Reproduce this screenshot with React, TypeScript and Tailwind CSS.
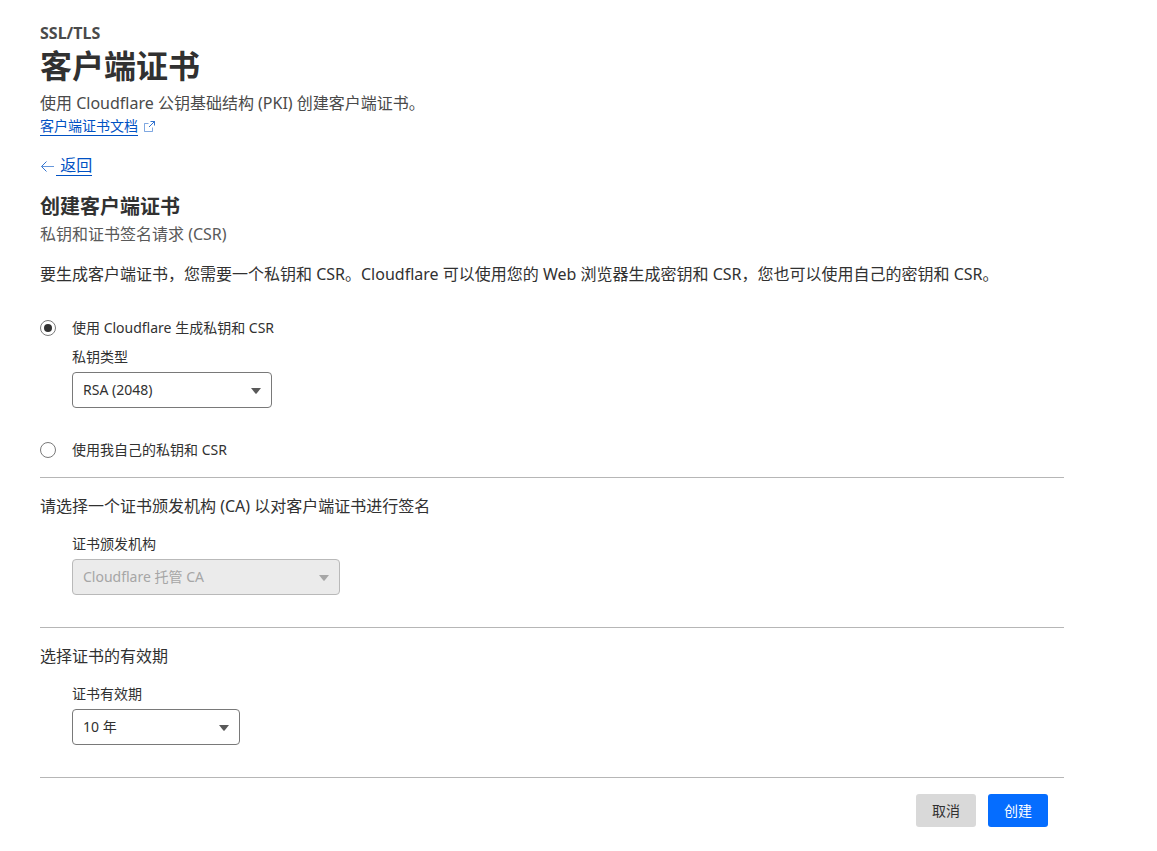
import { useState, type ReactNode } from "react";

function Select({
  id,
  label,
  options,
  width,
  disabled = false,
}: {
  id: string;
  label: string;
  options: string[];
  width: string;
  disabled?: boolean;
}) {
  return (
    <div>
      <label htmlFor={id} className="mb-[5px] block text-sm leading-5">
        {label}
      </label>
      <div className={`relative max-w-full ${width}`}>
        <select
          id={id}
          disabled={disabled}
          className="h-9 w-full appearance-none rounded border border-[#797979] bg-white pl-2.5 pr-8 text-sm leading-5 text-[#313131] disabled:border-[#b9b9b9] disabled:bg-[#ebebeb] disabled:text-[#a6a6a6] disabled:opacity-100"
        >
          {options.map((option) => (
            <option key={option}>{option}</option>
          ))}
        </select>
        <svg
          viewBox="0 0 10 6"
          className={`pointer-events-none absolute right-[11px] top-4 h-1.5 w-2.5 ${
            disabled ? "fill-[#a6a6a6]" : "fill-[#595959]"
          }`}
          aria-hidden="true"
        >
          <path d="M0 0h10L5.6 5.4a.8.8 0 0 1-1.2 0z" />
        </svg>
      </div>
    </div>
  );
}

function Radio({
  id,
  checked,
  onChange,
  children,
}: {
  id: string;
  checked: boolean;
  onChange: () => void;
  children: ReactNode;
}) {
  return (
    <div className="flex items-center gap-4">
      <input
        type="radio"
        id={id}
        name="key-source"
        checked={checked}
        onChange={onChange}
        className="grid size-4 shrink-0 appearance-none place-items-center rounded-full border border-[#797979] bg-white before:size-2 before:rounded-full checked:before:bg-[#313131]"
      />
      <label htmlFor={id} className="text-sm leading-5">
        {children}
      </label>
    </div>
  );
}

function Section({ title, children }: { title: string; children: ReactNode }) {
  return (
    <section className="border-t border-[#b6b6b6] pb-8 pt-4">
      <h3 className="mb-4 text-base">{title}</h3>
      <div className="pl-8">{children}</div>
    </section>
  );
}

export default function App() {
  const [source, setSource] = useState("cloudflare");

  return (
    <main
      lang="zh-CN"
      className="min-h-screen bg-white px-10 pb-6 pt-[21px] font-['Noto_Sans','Noto_Sans_CJK_SC',sans-serif] text-[#313131]"
    >
      <div className="max-w-5xl">
        <header>
          <p className="text-base font-bold text-[#4a4a4a]">SSL/TLS</p>
          <h1 className="text-[32px] font-bold leading-[42px]">客户端证书</h1>
          <p className="mt-1 text-base text-[#4a4a4a]">
            使用 Cloudflare 公钥基础结构 (PKI) 创建客户端证书。
          </p>
          <a
            href="#docs"
            className="mt-px flex w-fit items-center gap-1.5 text-sm text-[#0051c3]"
          >
            <span className="border-b border-[#0051c3] leading-[19px]">
              客户端证书文档
            </span>
            <svg
              viewBox="0 0 11 11"
              className="size-[11px] fill-none stroke-[#0051c3]"
              aria-hidden="true"
            >
              <path
                d="M4.5 2.5h-4v8h8v-4"
                className="opacity-50"
              />
              <path d="M6.5.5h4v4M10.5.5l-5.5 5.5" className="opacity-80" />
            </svg>
          </a>
        </header>

        <a
          href="#back"
          className="mt-5 flex w-fit items-center text-base text-[#0051c3]"
        >
          <svg
            viewBox="0 0 16 12"
            className="h-3 w-4 fill-none stroke-[#0051c3]"
            aria-hidden="true"
          >
            <path d="M14 6.5H2" className="opacity-60" />
            <path d="M6.5 1.5l-5 5 5 5" className="opacity-80" />
          </svg>
          <span className="whitespace-pre border-b border-[#0051c3] leading-[19px]">
            {" 返回"}
          </span>
        </a>

        <h2 className="mt-4 text-xl font-bold leading-[30px]">
          创建客户端证书
        </h2>
        <p className="text-base text-[#595959]">私钥和证书签名请求 (CSR)</p>
        <p className="mt-4 text-base">
          要生成客户端证书，您需要一个私钥和 CSR。Cloudflare 可以使用您的 Web
          浏览器生成密钥和 CSR，您也可以使用自己的密钥和 CSR。
        </p>

        <form onSubmit={(e) => e.preventDefault()}>
          <div className="pb-[17px] pt-8">
            <Radio
              id="use-cloudflare"
              checked={source === "cloudflare"}
              onChange={() => setSource("cloudflare")}
            >
              使用 Cloudflare 生成私钥和 CSR
            </Radio>
            <div className="mb-8 mt-[9px] pl-8">
              <Select
                id="key-type"
                label="私钥类型"
                options={["RSA (2048)", "ECDSA"]}
                width="w-[200px]"
              />
            </div>
            <Radio
              id="use-own"
              checked={source === "own"}
              onChange={() => setSource("own")}
            >
              使用我自己的私钥和 CSR
            </Radio>
          </div>

          <Section title="请选择一个证书颁发机构 (CA) 以对客户端证书进行签名">
            <Select
              id="ca"
              label="证书颁发机构"
              options={["Cloudflare 托管 CA"]}
              width="w-[268px]"
              disabled
            />
          </Section>

          <Section title="选择证书的有效期">
            <Select
              id="validity"
              label="证书有效期"
              options={["10 年", "5 年", "1 年"]}
              width="w-[168px]"
            />
          </Section>

          <div className="flex justify-end gap-3 border-t border-[#b6b6b6] px-4 pt-4 text-sm">
            <button
              type="button"
              className="rounded-[3px] bg-[#d9d9d9] px-4 leading-[33px]"
            >
              取消
            </button>
            <button
              type="submit"
              className="rounded-[3px] bg-[#056dff] px-4 leading-[33px] text-white"
            >
              创建
            </button>
          </div>
        </form>
      </div>
    </main>
  );
}
